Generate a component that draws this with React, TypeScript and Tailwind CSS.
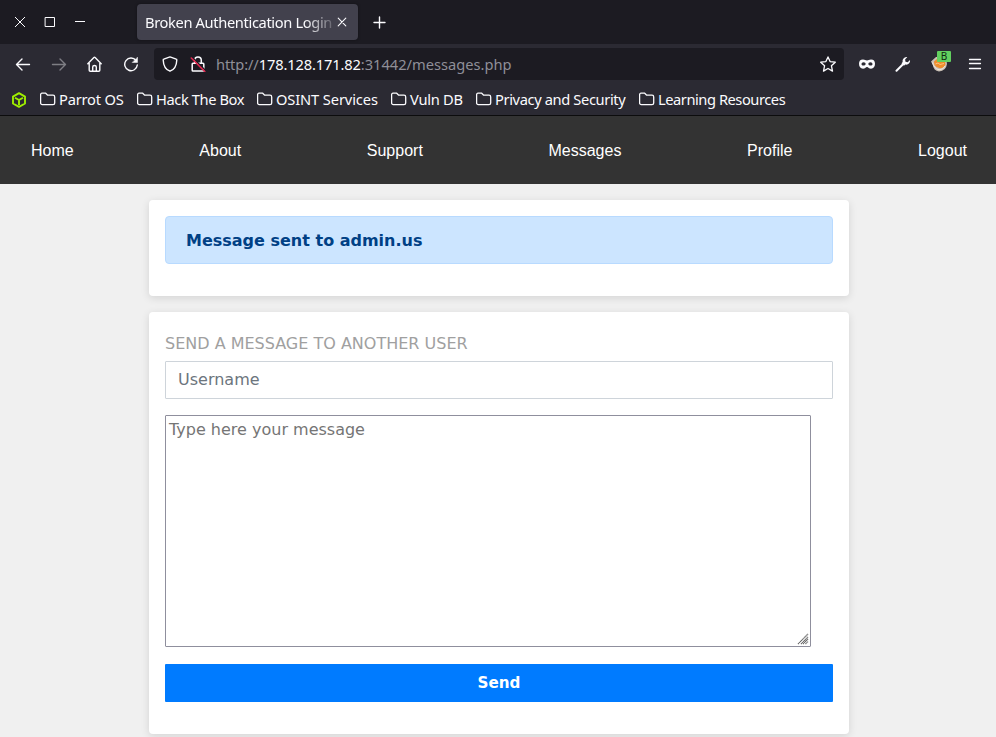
import React from "react";

const bookmarks = [
  { label: "Parrot OS", width: "w-[97px]", tracking: "tracking-[-0.2px]" },
  { label: "Hack The Box", width: "w-[120px]", tracking: "tracking-[-0.4px]" },
  { label: "OSINT Services", width: "w-[134px]", tracking: "tracking-[-0.12px]" },
  { label: "Vuln DB", width: "w-[85px]", tracking: "tracking-[-0.25px]" },
  { label: "Privacy and Security", width: "w-[163px]", tracking: "tracking-[-0.37px]" },
  { label: "Learning Resources", width: "w-[150px]", tracking: "tracking-[-0.45px]" },
];

const links = ["Home", "About", "Support", "Messages", "Profile", "Logout"];

const stroke = {
  fill: "none",
  stroke: "#fbfbfe",
  strokeWidth: 1.4,
  strokeLinecap: "round" as const,
  strokeLinejoin: "round" as const,
};

function TabStrip() {
  return (
    <div className="flex h-11 items-center bg-[#1c1b22]">
      <svg className="ml-3 h-4 w-4" viewBox="0 0 16 16" {...stroke} strokeWidth="1" strokeLinecap="butt">
        <path d="M3 3l10 10M13 3L3 13" />
      </svg>
      <svg className="ml-[14px] h-4 w-4" viewBox="0 0 16 16" {...stroke} strokeWidth="1" strokeLinejoin="miter">
        <path d="M3.500 3.500h9v9h-9z" />
      </svg>
      <svg className="ml-[14px] h-4 w-4" viewBox="0 0 16 16" {...stroke} strokeWidth="1" strokeLinecap="butt">
        <path d="M3 7.500h10" />
      </svg>
      <div className="ml-[49px] flex h-9 w-[221px] items-center rounded-[4px] bg-[#42414d] pl-2 shadow-[0_0_3px_rgba(0,0,0,0.4)]">
        <span className="w-[187px] shrink-0 whitespace-nowrap text-[14.67px] leading-5 tracking-[-0.36px] text-[#fbfbfe] [mask-image:linear-gradient(to_right,black_160px,transparent_194px)]">
          Broken Authentication Login
        </span>
        <svg className="ml-[5px] h-[10px] w-[10px] shrink-0" viewBox="0 0 10 10" {...stroke} strokeWidth="1.100">
          <path d="M1.200 1.200l7.600 7.600M8.800 1.200l-7.600 7.600" />
        </svg>
      </div>
      <svg className="ml-[13px] h-4 w-4" viewBox="0 0 16 16" {...stroke}>
        <path d="M8.500 3v11M3 8.500h11" />
      </svg>
    </div>
  );
}

function Toolbar() {
  return (
    <div className="flex h-10 items-center pl-[15px]">
      <svg className="h-4 w-4" viewBox="0 0 16 16" {...stroke}>
        <path d="M1.500 8.500h13M7 3L1.500 8.500 7 14" />
      </svg>
      <svg className="ml-5 h-4 w-4 opacity-40" viewBox="0 0 16 16" {...stroke}>
        <path d="M1.500 8.500h13M9 3l5.500 5.500L9 14" />
      </svg>
      <svg className="ml-5 h-4 w-4" viewBox="0 0 16 16" {...stroke}>
        <path d="M.8 7.800 6.900 1.600c.4-.4.800-.4 1.200 0l6.100 6.200M2.200 7v7.200c0 .7.400 1.100 1.100 1.100h8.400c.7 0 1.100-.4 1.100-1.100V7M5.700 15v-4c0-1 .6-1.500 1.800-1.500s1.800.5 1.800 1.500v4" />
      </svg>
      <svg className="ml-5 h-4 w-4" viewBox="0 0 16 16" {...stroke}>
        <path d="M13 4.500A6.300 6.300 0 1 0 14.300 9" />
        <path d="M14.500 1.500v5h-5z" fill="#fbfbfe" strokeWidth=".5" />
      </svg>
      <div className="ml-[15px] flex h-8 w-[690px] items-center rounded-[4px] bg-[#1c1b22] pl-2">
        <svg className="h-4 w-4" viewBox="0 0 16 16" {...stroke} strokeWidth="1.400">
          <path d="M8 .9 14.200 3.200c.4 0 .6.300.6.700C14.600 9.500 12.500 13.500 8 15.200 3.500 13.500 1.400 9.500 1.200 3.900c0-.4.200-.7.600-.7z" />
        </svg>
        <svg className="ml-3 h-4 w-4" viewBox="0 0 16 16" {...stroke} strokeWidth="1.500">
          <path d="M4.700 7V4.200a3.300 3.300 0 0 1 6.600 0V7M3 7.200h10c.5 0 .8.300.8.800v6.200c0 .5-.3.800-.8.800H3c-.5 0-.8-.3-.8-.8V8c0-.5.300-.8.800-.8z" />
          <path d="M2.500 1.500l13 13" stroke="#1c1b22" strokeWidth="1.500" />
          <path d="M1.300 2l13.500 13.500" stroke="#e22850" strokeWidth="1.600" />
        </svg>
        <span className="ml-[10px] grow whitespace-nowrap text-[14.67px] leading-5 text-[#8f8f98]">
          <span className="tracking-[-0.12px]">http://</span>
          <span className="tracking-[-0.14px] text-[#fbfbfe]">178.128.171.82</span>:31442/messages.php
        </span>
        <svg className="mr-2 h-4 w-4" viewBox="0 0 16 16" {...stroke} strokeWidth="1.300">
          <path d="M8 .9l2.100 4.700 5.200.6-3.900 3.500 1.100 5.400L8 12.500l-4.500 2.600 1.100-5.400L.7 6.200l5.200-.6z" />
        </svg>
      </div>
      <svg className="ml-[15px] h-4 w-4" viewBox="0 0 16 16">
        <path fill="#fbfbfe" fillRule="evenodd" d="M4 3.400c2 0 2.500 1 4 1s2-1 4-1c2.700 0 4 1.500 4 4.300 0 2.800-1.500 5-4 5-2 0-2.700-1.800-4-1.800s-2 1.800-4 1.800c-2.500 0-4-2.200-4-5 0-2.800 1.300-4.300 4-4.300zM4.600 6.200c-1.300 0-2.100.9-2.100 1.800s.8 1.600 2 1.600S6.700 8.800 6.700 8s-.8-1.800-2.100-1.800zm6.800 0c-1.300 0-2.100 1-2.100 1.800s1 1.600 2.200 1.600 2-.7 2-1.600-.8-1.800-2.100-1.800z" />
      </svg>
      <svg className="ml-5 h-4 w-4" viewBox="0 0 16 16">
        <path d="M1.500 14.700 8.500 7.700" stroke="#fbfbfe" strokeWidth="2" strokeLinecap="round" />
        <path fill="#fbfbfe" d="M12.300 1C9.500.8 7 3 7.700 5.900L6.500 7.200l2.500 2.500 1.300-1.200C13 9.200 15.500 7 15 4l-2.300 2.200-2.200-.5-.4-2.100z" />
      </svg>
      <div className="relative ml-5 h-4 w-4">
        <svg className="h-4 w-4" viewBox="0 0 16 16">
          <path d="M0 5.500 5 1h10l1 7q-1 7-8 7.500Q2.500 14.500 1.800 9z" fill="#c9bfb5" />
          <path d="M3 5.500 7 2h7l.3 7q-1.300 3-5.300 3.200Q5.500 12 3.500 9z" fill="#ef8d2c" />
          <path d="M4.500 8l2.500-1 2 1.500 4-1" fill="none" stroke="#ffcf94" strokeWidth=".8" />
          <path d="M1.500 6.500Q3 12.500 8 13.800q4.500 0 6.200-4" fill="none" stroke="#f4ece2" strokeWidth=".9" />
        </svg>
        <span className="absolute -top-[5px] left-[6px] flex h-[11px] w-[14px] items-center justify-center rounded-[1px] bg-[#62d05f] text-[10px] leading-[11px] text-[#102810]">B</span>
      </div>
      <svg className="ml-5 h-4 w-4" viewBox="0 0 16 16" {...stroke} strokeWidth="1.300">
        <path d="M2.500 3.500h11M2.500 7.500h11M2.500 12.500h11" />
      </svg>
    </div>
  );
}

function Bookmarks() {
  return (
    <div className="flex h-8 items-center border-b border-[#0c0c0d] pl-[11px]">
      <svg className="mr-[13px] h-4 w-4" viewBox="0 0 16 16" fill="none" stroke="#9fef00" strokeWidth="1.900" strokeLinejoin="round">
        <path d="M8 1.200 14 4.600v6.900L8 14.900l-6-3.400V4.600zM4 5.700l4 2.300 4-2.300M8 8v5" />
      </svg>
      {bookmarks.map((b) => (
        <div key={b.label} className={`flex shrink-0 items-center pb-px whitespace-nowrap ${b.width}`}>
          <svg className="mr-[3px] h-4 w-4 shrink-0" viewBox="0 0 16 16" {...stroke} strokeWidth="1.300">
            <path d="M2 2.200h3.700l2 2H13c1 0 1.700.7 1.700 1.700v6c0 1-.7 1.700-1.700 1.700H2.300c-1 0-1.700-.7-1.700-1.700V3.700c0-.9.600-1.500 1.400-1.500z" />
          </svg>
          <span className={`-mt-px text-[14.67px] leading-5 text-[#fbfbfe] ${b.tracking}`}>{b.label}</span>
        </div>
      ))}
    </div>
  );
}

const card = "w-[700px] rounded-[4px] bg-white px-4 shadow-[0_2px_8px_rgba(0,0,0,0.12)]";

export default function App() {
  return (
    <div className="h-[737px] w-[996px] overflow-hidden bg-[#f0f0f0] font-['DejaVu_Sans',sans-serif] text-base">
      <header className="bg-[#2b2a33] font-['Noto_Sans',sans-serif]">
        <TabStrip />
        <Toolbar />
        <Bookmarks />
      </header>
      <nav className="flex h-[68px] items-center justify-between bg-[#333] pt-0.5 pr-[29px] pl-[31px] font-['Liberation_Sans',Arial,sans-serif] text-white">
        {links.map((l) => (
          <a key={l}>{l}</a>
        ))}
      </nav>
      <main className="flex flex-col gap-4 pt-4 pl-[149px]">
        <section className={`${card} h-24 pt-4`}>
          <div className="flex h-12 items-center rounded-[4px] border border-[#b8daff] bg-[#cce5ff] px-5 pt-0.5 font-bold text-[#004085]">
            Message sent to admin.us
          </div>
        </section>
        <section className={`${card} h-[422px] pt-5`}>
          <h2 className="mb-[5px] leading-6 text-[#a0a0a0]">SEND A MESSAGE TO ANOTHER USER</h2>
          <div className="flex h-[38px] items-center rounded-[1px] border border-[#ced4da] px-3 text-[#6c757d]">
            <span>Username</span>
          </div>
          <div className="mt-4 flex h-[232px] w-[646px] justify-between rounded-[1px] border border-[#8f8f9d] pt-0.5 pl-[3px] text-[#757575]">
            <span className="leading-6">Type here your message</span>
            <svg className="mr-[1px] mb-[1px] h-3 w-3 self-end" viewBox="0 0 12 12" stroke="#666" strokeWidth="1.200" strokeDasharray="1.200 .3">
              <path d="M1 11 11 1M4 11l7-7M6 11l5-5M8.500 11 11 8.500" />
            </svg>
          </div>
          <div className="mt-[17px] flex h-[38px] items-center justify-center rounded-[1px] bg-[#007bff] text-[15.2px] font-bold text-white">
            Send
          </div>
        </section>
      </main>
    </div>
  );
}
